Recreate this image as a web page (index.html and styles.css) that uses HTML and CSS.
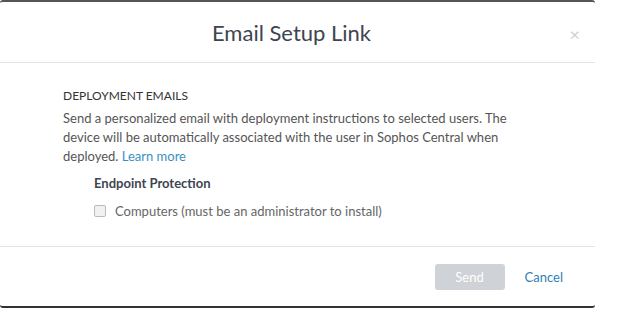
FILE: index.html
```html
<!DOCTYPE html>
<html lang="en">
<head>
  <meta charset="UTF-8" />
  <meta name="viewport" content="width=device-width, initial-scale=1.0"/>
  <title>Email Setup Link</title>
  <link rel="stylesheet" href="styles.css">
</head>
<body>
  <div class="modal">
    <div class="modal-header">
      <h1>Email Setup Link</h1>
      <span class="close">&times;</span>
    </div>

    <div class="modal-body">
      <h2>DEPLOYMENT EMAILS</h2>
      <p>Send a personalized email with deployment instructions to selected users. The
        device will be automatically associated with the user in Sophos Central when
        deployed. <a href="#">Learn more</a></p>

      <div class="product">
        <h3>Endpoint Protection</h3>
        <label class="check">
          <input type="checkbox" />
          <span class="box"></span>
          Computers (must be an administrator to install)
        </label>
      </div>
    </div>

    <div class="modal-footer">
      <button class="send" disabled>Send</button>
      <a href="#" class="cancel">Cancel</a>
    </div>
  </div>
</body>
</html>
```

FILE: styles.css
```css
body {
  margin: 0;
  background: #fff;
  font-family: Lato, "Liberation Sans", sans-serif;
  color: #555;
}

.modal {
  width: 595px;
  height: 308px;
  box-sizing: border-box;
  border-top: 2px solid #555;
  border-bottom: 2px solid #333;
  border-radius: 3px;
  background: #fff;
  display: flex;
  flex-direction: column;
}

.modal-header {
  height: 60px;
  display: flex;
  align-items: center;
  justify-content: center;
  position: relative;
  border-bottom: 1px solid #e4e4e4;
}

.modal-header h1 {
  margin: 0 12px 0 0;
  font-size: 22px;
  font-weight: 400;
  color: #3d4650;
}

.close {
  position: absolute;
  right: 15px;
  top: 21px;
  font-size: 18px;
  color: #cfcfcf;
}

.modal-body {
  flex: 1;
  padding: 25px 0 0 63px;
  border-bottom: 1px solid #e4e4e4;
}

.modal-body h2 {
  margin: 0 0 6px;
  font-size: 12px;
  font-weight: 400;
  color: #333;
}

.modal-body p {
  margin: 0;
  width: 460px;
  font-size: 13px;
  line-height: 19px;
}

.modal-body a {
  color: #3a8fc2;
  text-decoration: none;
}

.product {
  padding: 9px 0 0 31px;
}

.product h3 {
  margin: 0 0 12px;
  font-size: 13px;
  font-weight: 700;
  color: #3d4650;
}

.check {
  display: flex;
  align-items: center;
  font-size: 13px;
  color: #666;
}

.check input {
  display: none;
}

.box {
  width: 10px;
  height: 10px;
  margin-right: 9px;
  border: 1px solid #bbb;
  border-radius: 2px;
  background: #f1f1f1;
}

.modal-footer {
  height: 59px;
  flex: none;
  display: flex;
  align-items: center;
  justify-content: flex-end;
  padding-right: 32px;
}

.send {
  width: 70px;
  height: 26px;
  border: none;
  border-radius: 3px;
  background: #cfd2d6;
  color: #fff;
  font-family: inherit;
  font-size: 13px;
}

.cancel {
  margin-left: 20px;
  font-size: 13px;
  color: #2f7fb5;
  text-decoration: none;
}
```
